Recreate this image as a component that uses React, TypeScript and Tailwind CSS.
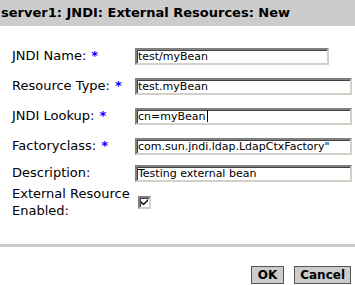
import React from "react";

const font = { fontFamily: '"DejaVu Sans", Verdana, sans-serif' };

type Field = { label: string; value: string; required?: boolean; narrow?: boolean; caret?: boolean; last?: boolean };

const fields: Field[] = [
  { label: "JNDI Name:", value: "test/myBean", required: true, narrow: true },
  { label: "Resource Type:", value: "test.myBean", required: true },
  { label: "JNDI Lookup:", value: "cn=myBean", required: true, caret: true },
  { label: "Factoryclass:", value: 'com.sun.jndi.ldap.LdapCtxFactory"', required: true },
  { label: "Description:", value: "Testing external bean", last: true },
];

function TextBox({ value, narrow, caret }: { value: string; narrow?: boolean; caret?: boolean }) {
  return (
    <div
      className={`flex h-[17px] items-center overflow-hidden border-2 border-[#808080] border-b-[#d4d0c8] border-r-[#d4d0c8] bg-white pl-[1px] text-[11px] leading-none text-black shadow-[inset_1px_1px_0_#404040] ${narrow ? "w-[194px]" : "w-[217px]"}`}
    >
      <span className="whitespace-nowrap">{value}</span>
      {caret && <span className="ml-[1px] inline-block h-[12px] w-[1px] bg-black" />}
    </div>
  );
}

export default function App() {
  return (
    <div className="h-[285px] w-[355px] overflow-hidden bg-white text-black" style={font}>
      <div className="h-[26px] bg-[#cccccc] pl-[1px] text-[13px] font-bold leading-[26px]">
        server1: JNDI: External Resources: New
      </div>

      <div className="flex flex-col pl-[12px] pt-[15px]">
        {fields.map((f) => (
          <div key={f.label} className={`flex items-center ${f.last ? "h-[24px]" : "h-[30px]"}`}>
            <div className="w-[123px] text-[13px]">
              {f.label}
              {f.required && <span className="ml-[5px] font-bold text-[#0000ff]">*</span>}
            </div>
            <TextBox value={f.value} narrow={f.narrow} caret={f.caret} />
          </div>
        ))}
        <div className="flex items-center">
          <div className="w-[126px] text-[13px] leading-[17px]">
            External Resource
            <br />
            Enabled:
          </div>
          <div className="flex h-[13px] w-[13px] items-center justify-center border-2 border-[#808080] border-b-[#d4d0c8] border-r-[#d4d0c8] bg-white shadow-[inset_1px_1px_0_#404040]">
            <svg width="7" height="7" viewBox="0 0 7 7">
              <path d="M0 2 L0 4 L2 6 L3 6 L7 2 L7 0 L2.5 4.5 Z" fill="#000" />
            </svg>
          </div>
        </div>
      </div>

      <div className="mt-[25px] h-[3px] bg-[#cccccc]" />

      <div className="flex justify-end gap-[10px] pr-[4px] pt-[19px]">
        <button className="h-[18px] border border-[#555] bg-[#cccccc] px-[6px] text-[12px] font-bold leading-none">
          OK
        </button>
        <button className="h-[18px] border border-[#555] bg-[#cccccc] px-[5px] text-[12px] font-bold leading-none">
          Cancel
        </button>
      </div>
    </div>
  );
}
